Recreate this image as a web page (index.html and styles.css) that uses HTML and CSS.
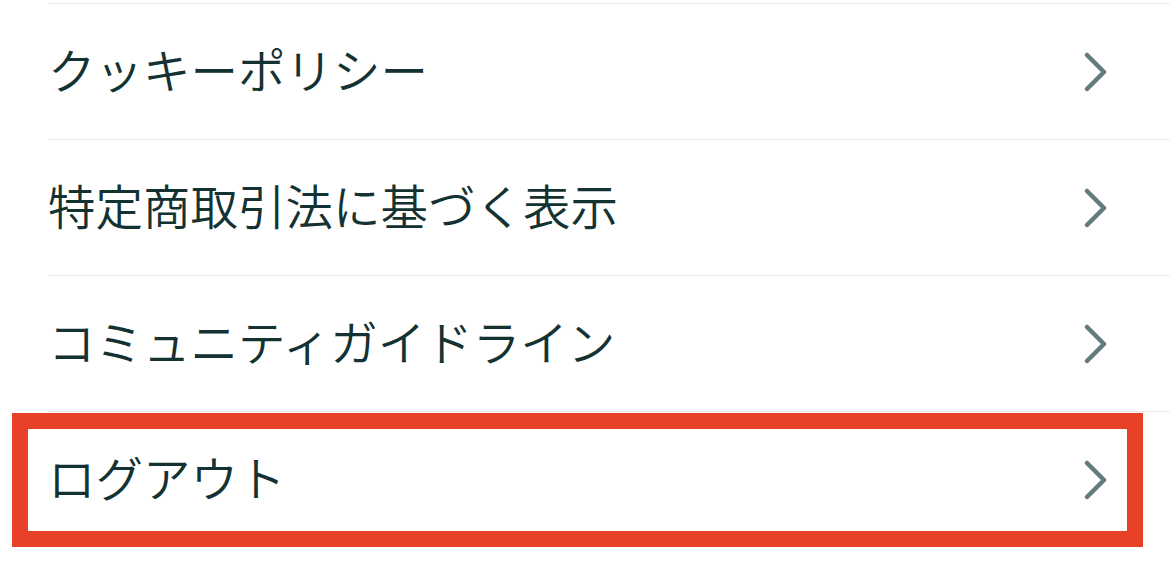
FILE: index.html
```html
<!DOCTYPE html>
<html lang="ja">
<head>
    <meta charset="UTF-8">
    <title>メニュー</title>
    <link rel="stylesheet" href="styles.css">
</head>
<body>
    <ul class="menu">
        <li class="item">
            <span class="label">クッキーポリシー</span>
            <svg class="chevron" viewBox="0 0 24 40"><path d="M3 3 L20 20 L3 37"/></svg>
        </li>
        <li class="item">
            <span class="label">特定商取引法に基づく表示</span>
            <svg class="chevron" viewBox="0 0 24 40"><path d="M3 3 L20 20 L3 37"/></svg>
        </li>
        <li class="item">
            <span class="label">コミュニティガイドライン</span>
            <svg class="chevron" viewBox="0 0 24 40"><path d="M3 3 L20 20 L3 37"/></svg>
        </li>
        <li class="item">
            <span class="label">ログアウト</span>
            <svg class="chevron" viewBox="0 0 24 40"><path d="M3 3 L20 20 L3 37"/></svg>
        </li>
    </ul>
    <div class="highlight"></div>
</body>
</html>
```

FILE: styles.css
```css
* {
    margin: 0;
    padding: 0;
    box-sizing: border-box;
}
body {
    background-color: #ffffff;
    font-family: "Noto Sans CJK JP", "Noto Sans", sans-serif;
    color: #143232;
    position: relative;
    height: 588px;
    overflow: hidden;
}
.menu {
    list-style: none;
    padding-top: 3px;
    padding-left: 48px;
}
.item {
    display: flex;
    align-items: center;
    justify-content: space-between;
    height: 136px;
    border-top: 1px solid #ebebeb;
    padding-right: 62px;
}
.label {
    font-size: 47.5px;
    font-weight: 350;
    line-height: 1;
    padding-bottom: 6px;
}
.chevron {
    width: 24px;
    height: 40px;
    fill: none;
    stroke: #617d7b;
    stroke-width: 4.5;
    stroke-linecap: round;
    stroke-linejoin: round;
}
.highlight {
    position: absolute;
    left: 12px;
    top: 413px;
    width: 1131px;
    height: 134px;
    border: 16px solid #e94128;
}
```
